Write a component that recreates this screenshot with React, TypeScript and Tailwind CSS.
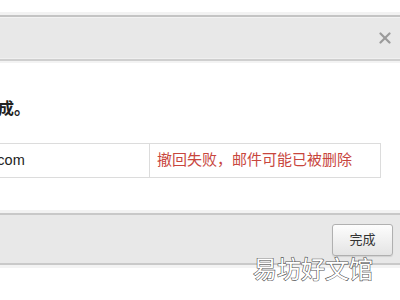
export default function App() {
  return (
    <div className="relative w-[400px] h-[300px] overflow-hidden bg-white font-['Liberation_Sans','Noto_Sans_CJK_SC',sans-serif]">
      {/* ── Header bar ── */}
      <div className="mt-[12px] h-[3px] bg-[#f2f2f2]" />
      <div className="border-t-2 border-[#c4c4c4] bg-[#e8e8e8]">
        <div className="h-[42px] border-t border-[#f2f2f2] border-b border-b-[#f0f0f0] flex items-center justify-end pr-[9px]">
          <svg width="12" height="12" viewBox="0 0 12 12" stroke="#9a9a9a" strokeWidth="2.2" strokeLinecap="round">
            <line x1="1.5" y1="1.5" x2="10.5" y2="10.5" />
            <line x1="10.5" y1="1.5" x2="1.5" y2="10.5" />
          </svg>
        </div>
      </div>
      <div className="h-[2px] bg-[#cfcfcf]" />
      <div className="h-[2px] bg-[#f3f3f3]" />

      {/* ── Body ── */}
      <div className="pt-[36px] ml-[-82px] text-[16px] leading-[20px] font-bold text-[#222]">
        邮件撤回完成。
      </div>

      <div className="mt-[24px] ml-[-75px] w-[456px] flex border border-[#dcdcdc] h-[35px] text-[14px]">
        <div className="w-[224px] border-r border-[#dcdcdc] flex items-center pl-[5px] text-[#222] text-[14.5px]">
          test@163.com
        </div>
        <div className="flex-1 flex items-center pl-[7px] text-[15px] text-[#c8463d]">
          撤回失败，邮件可能已被删除
        </div>
      </div>

      {/* ── Footer bar ── */}
      <div className="mt-[32px] h-[3px] bg-[#f2f2f2]" />
      <div className="border-t-2 border-[#c8c8c8] bg-[#e8e8e8] h-[50px] flex items-start justify-end pr-[7px] pt-[9px]">
        <button className="w-[61px] h-[32px] rounded-[3px] border border-[#b0b0b0] bg-gradient-to-b from-[#fdfdfd] to-[#e4e4e4] text-[13px] text-[#333] shadow-[0_1px_1px_rgba(0,0,0,0.1)]">
          完成
        </button>
      </div>
      <div className="h-[2px] bg-[#c9c9c9]" />
      <div className="h-[3px] bg-[#f3f3f3]" />

      {/* ── Watermark ── */}
      <div className="absolute left-[253px] top-[254px] text-[24px] leading-[28px] text-white font-['Noto_Sans_CJK_SC',sans-serif] [-webkit-text-stroke:1.2px_#555] [paint-order:stroke_fill]">
        易坊好文馆
      </div>
    </div>
  );
}
